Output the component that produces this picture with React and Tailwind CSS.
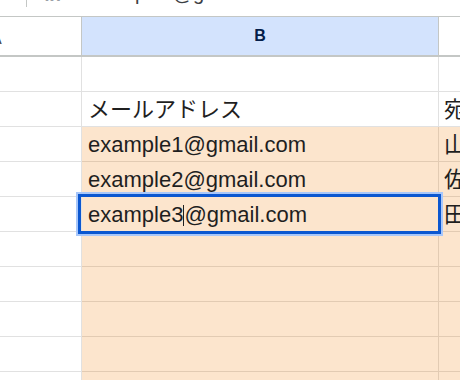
const font = { fontFamily: '"Liberation Sans", "Noto Sans CJK JP", sans-serif' }

const rows = [
  { b: '', c: '', fill: false },
  { b: 'メールアドレス', c: '宛名', fill: false },
  { b: 'example1@gmail.com', c: '山田', fill: true },
  { b: 'example2@gmail.com', c: '佐藤', fill: true },
  { b: 'example3@gmail.com', c: '田中', fill: true, active: true },
  { b: '', c: '', fill: true },
  { b: '', c: '', fill: true },
  { b: '', c: '', fill: true },
  { b: '', c: '', fill: true },
  { b: '', c: '', fill: true },
]

function Row({ row }) {
  const line = row.fill ? 'border-[#e2cbb3]' : 'border-[#e1e1e1]'
  const bg = row.fill ? 'bg-[#fce5cd]' : 'bg-white'
  return (
    <div className="flex h-[35px] shrink-0">
      <div className="w-[82px] shrink-0 border-r border-b border-[#e1e1e1] bg-white" />
      <div className={`relative w-[357px] shrink-0 border-r border-b ${line} ${bg} flex items-end pb-[4px] pl-[6px] text-[22px] leading-[24px] text-[#1f1f1f]`}>
        {row.active ? (
          <>
            <span>example3</span>
            <span className="mb-[1px] inline-block h-[21px] w-[1px] bg-[#1f1f1f]" />
            <span>@gmail.com</span>
            {/* selected cell outline */}
            <div className="pointer-events-none absolute -left-[4px] -right-[3px] -top-[3px] -bottom-[3px] z-10 border-[3px] border-[#0b57d0] shadow-[0_0_0_2px_#a8c7fa]" />
          </>
        ) : (
          row.b
        )}
      </div>
      <div className={`flex-1 overflow-hidden whitespace-nowrap border-b ${line} ${bg} flex items-end pb-[4px] pl-[5px] text-[22px] leading-[24px] text-[#1f1f1f]`}>
        {row.c}
      </div>
    </div>
  )
}

export default function App() {
  return (
    <div className="relative h-[380px] w-[460px] overflow-hidden bg-white" style={font}>
      {/* formula bar, scrolled mostly out of view */}
      <div className="relative flex h-[16px] items-end overflow-hidden">
        <div className="absolute left-[26px] top-0 h-[7px] w-[1px] bg-[#c4c7c5]" />
        <div className="absolute left-[45px] -top-[18px] text-[18px] font-bold italic text-[#9aa0a6]">fx</div>
        <div className="absolute left-[86px] -top-[22px] text-[20px] text-[#3c4043]">example3@gmail.com</div>
      </div>
      <div className="flex h-[41px] border-t border-b-2 border-[#c4c7c5]">
        <div className="relative w-[82px] shrink-0 overflow-hidden border-r border-[#c4c7c5] bg-white">
          <span className="absolute -left-[9px] top-[10px] text-[16px] text-[#444746]">A</span>
        </div>
        <div className="flex w-[357px] shrink-0 items-center justify-center border-r border-[#c4c7c5] bg-[#d3e3fd] text-[16px] font-bold text-[#041e49]">
          B
        </div>
        <div className="flex-1 bg-white" />
      </div>
      <div className="flex flex-col">
        {rows.map((r, i) => (
          <Row key={i} row={r} />
        ))}
      </div>
    </div>
  )
}
